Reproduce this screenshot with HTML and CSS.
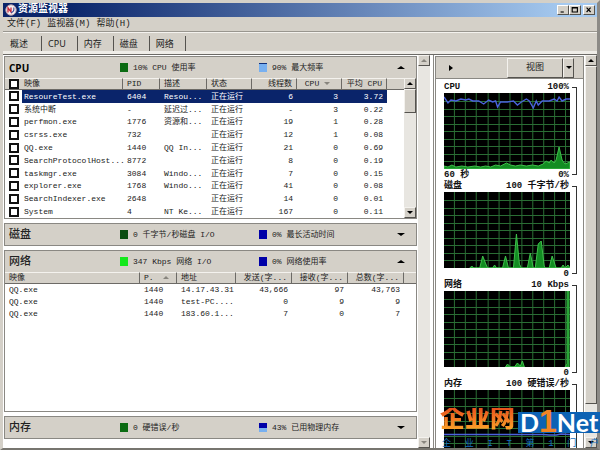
FILE: index.html
```
<!DOCTYPE html>
<html lang="zh-CN">

<head>
	<meta charset="utf-8">
	<meta name="viewport" content="width=device-width,initial-scale=1">
	<title>资源监视器</title>
	<link rel="stylesheet" href="styles.css">
</head>

<body>
	<div class="window">
		<header class="titlebar">
			<svg class="appicon" viewBox="0 0 12 12">
				<circle cx="6" cy="6" r="5.2" fill="#f4eef0" stroke="#b9a0aa" />
				<path d="M3 8.5V3.8L6 8V3.5" fill="none" stroke="#c8283c" stroke-width="1.3" />
				<path d="M6 8.5Q9.500 8 8.800 3.500" fill="none" stroke="#394a94" stroke-width="1.1" />
			</svg>
			<h1>资源监视器</h1>
			<button class="winbtn" aria-label="最小化"><svg viewBox="0 0 11 10"><path d="M2.500 7.500h4" /></svg></button>
			<button class="winbtn" aria-label="最大化"><svg viewBox="0 0 11 10"><path d="M2 2h6.500v5.500H2zM2 2.500h6" /></svg></button>
			<button class="winbtn close" aria-label="关闭"><svg viewBox="0 0 11 10"><path d="M2.500 2l5 5.500M7.500 2l-5 5.500" /></svg></button>
		</header>

		<nav class="menu">
			<button>文件(F)</button>
			<button>监视器(M)</button>
			<button>帮助(H)</button>
		</nav>

		<nav class="tabs">
			<button class="active">概述</button>
			<button>CPU</button>
			<button>内存</button>
			<button>磁盘</button>
			<button>网络</button>
		</nav>

		<main>
			<div class="left">
				<section class="panel">
					<div class="panelhead">
						<h2 class="latin">CPU</h2>
						<span class="legend"><i class="swatch green"></i>10% CPU 使用率</span>
						<span class="legend"><i class="swatch sky"></i>90% 最大频率</span>
						<button class="toggle" aria-label="折叠 CPU"><i class="up"></i></button>
					</div>
					<div class="scrollbox">
						<table class="processes">
							<colgroup>
								<col class="c-check"><col class="c-image"><col class="c-pid"><col class="c-desc">
								<col class="c-num"><col class="c-num"><col class="c-num"><col class="c-num"><col>
							</colgroup>
							<thead>
								<tr>
									<th class="nosep"><input type="checkbox" aria-label="全选"></th>
									<th>映像</th>
									<th>PID</th>
									<th>描述</th>
									<th>状态</th>
									<th class="num">线程数</th>
									<th class="num">CPU <i class="sort down"></i></th>
									<th class="num">平均 CPU</th>
									<th class="nosep"></th>
								</tr>
							</thead>
							<tbody>
								<tr class="selected"><td><input type="checkbox" aria-label="ResoureTest.exe"></td><td>ResoureTest.exe</td><td>6404</td><td>Resou...</td><td>正在运行</td><td class="num">6</td><td class="num">3</td><td class="num">3.72</td><td></td></tr>
								<tr><td><input type="checkbox" aria-label="系统中断"></td><td>系统中断</td><td>-</td><td>延迟过...</td><td>正在运行</td><td class="num">-</td><td class="num">3</td><td class="num">0.22</td><td></td></tr>
								<tr><td><input type="checkbox" aria-label="perfmon.exe"></td><td>perfmon.exe</td><td>1776</td><td>资源和...</td><td>正在运行</td><td class="num">19</td><td class="num">1</td><td class="num">0.28</td><td></td></tr>
								<tr><td><input type="checkbox" aria-label="csrss.exe"></td><td>csrss.exe</td><td>732</td><td></td><td>正在运行</td><td class="num">12</td><td class="num">1</td><td class="num">0.08</td><td></td></tr>
								<tr><td><input type="checkbox" aria-label="QQ.exe"></td><td>QQ.exe</td><td>1440</td><td>QQ In...</td><td>正在运行</td><td class="num">21</td><td class="num">0</td><td class="num">0.69</td><td></td></tr>
								<tr><td><input type="checkbox" aria-label="SearchProtocolHost"></td><td>SearchProtocolHost...</td><td>8772</td><td></td><td>正在运行</td><td class="num">8</td><td class="num">0</td><td class="num">0.19</td><td></td></tr>
								<tr><td><input type="checkbox" aria-label="taskmgr.exe"></td><td>taskmgr.exe</td><td>3084</td><td>Windo...</td><td>正在运行</td><td class="num">7</td><td class="num">0</td><td class="num">0.15</td><td></td></tr>
								<tr><td><input type="checkbox" aria-label="explorer.exe"></td><td>explorer.exe</td><td>1768</td><td>Windo...</td><td>正在运行</td><td class="num">41</td><td class="num">0</td><td class="num">0.08</td><td></td></tr>
								<tr><td><input type="checkbox" aria-label="SearchIndexer.exe"></td><td>SearchIndexer.exe</td><td>2648</td><td></td><td>正在运行</td><td class="num">14</td><td class="num">0</td><td class="num">0.01</td><td></td></tr>
								<tr><td><input type="checkbox" aria-label="System"></td><td>System</td><td>4</td><td>NT Ke...</td><td>正在运行</td><td class="num">167</td><td class="num">0</td><td class="num">0.11</td><td></td></tr>
							</tbody>
						</table>
						<div class="scrollbar">
							<button aria-label="向上"><i class="up"></i></button>
							<div class="thumb short"></div>
							<div class="track"></div>
							<button aria-label="向下"><i class="down"></i></button>
						</div>
					</div>
				</section>

				<section class="panel">
					<div class="panelhead">
						<h2>磁盘</h2>
						<span class="legend"><i class="swatch dark"></i>0 千字节/秒磁盘 I/O</span>
						<span class="legend"><i class="swatch blue"></i>0% 最长活动时间</span>
						<button class="toggle" aria-label="展开磁盘"><i class="down"></i></button>
					</div>
				</section>

				<section class="panel grow">
					<div class="panelhead">
						<h2>网络</h2>
						<span class="legend"><i class="swatch lime"></i>347 Kbps 网络 I/O</span>
						<span class="legend"><i class="swatch blue"></i>0% 网络使用率</span>
						<button class="toggle" aria-label="折叠网络"><i class="up"></i></button>
					</div>
					<table class="network">
						<colgroup>
							<col class="n-image"><col class="n-pid"><col class="n-addr">
							<col class="n-num"><col class="n-num"><col class="n-num"><col>
						</colgroup>
						<thead>
							<tr>
								<th>映像</th>
								<th>P. <i class="sort up"></i></th>
								<th>地址</th>
								<th class="num">发送(字...</th>
								<th class="num">接收(字...</th>
								<th class="num">总数(字...</th>
								<th class="nosep"></th>
							</tr>
						</thead>
						<tbody>
							<tr><td>QQ.exe</td><td>1440</td><td>14.17.43.31</td><td class="num">43,666</td><td class="num">97</td><td class="num">43,763</td><td></td></tr>
							<tr><td>QQ.exe</td><td>1440</td><td>test-PC....</td><td class="num">0</td><td class="num">9</td><td class="num">9</td><td></td></tr>
							<tr><td>QQ.exe</td><td>1440</td><td>183.60.1...</td><td class="num">7</td><td class="num">0</td><td class="num">7</td><td></td></tr>
						</tbody>
					</table>
				</section>

				<section class="panel">
					<div class="panelhead">
						<h2>内存</h2>
						<span class="legend"><i class="swatch green"></i>0 硬错误/秒</span>
						<span class="legend"><i class="swatch used"></i>43% 已用物理内存</span>
						<button class="toggle" aria-label="展开内存"><i class="down"></i></button>
					</div>
				</section>
			</div>

			<div class="scrollbar disabled">
				<button aria-label="向上"><i class="up"></i></button>
				<div class="track"></div>
				<button aria-label="向下"><i class="down"></i></button>
			</div>

			<aside class="right">
				<div class="viewbar">
					<button class="expand" aria-label="隐藏图表"><i class="next"></i></button>
					<button class="view">视图</button>
					<button class="viewdrop" aria-label="视图选项"><i class="down"></i></button>
				</div>
				<div class="graphs">
					<section class="graph">
						<div class="cap"><h3>CPU</h3><span>100%</span></div>
						<svg viewBox="0 0 127 76" preserveAspectRatio="none">
							<defs>
								<path id="grid" d="M10.500 0v76M21.500 0v76M32.500 0v76M44.500 0v76M55.500 0v76M66.500 0v76M78.500 0v76M89.500 0v76M100.500 0v76M111.500 0v76M122.500 0v76M0 8.500h127M0 16.500h127M0 23.500h127M0 31.500h127M0 38.500h127M0 46.500h127M0 53.500h127M0 61.500h127M0 68.500h127" />
							</defs>
							<use href="#grid" class="grid" />
							<path class="area" d="M0 76V73L4 74L8 72L12 74L18 73L24 74L31 73L37 74L42 73L47 74L52 72L57 73L63 70L67 72L72 73L77 72L83 73L89 72L95 73L100 71L103 68L106 70L108 67L111 70L113 67L116 54L119 67L122 71L127 69V76Z" />
							<path class="line" d="M0 4L4 10L7 7L12 8L17 6L22 7L25 6L29 8L35 8L40 11L45 7L49 9L52 8L54 14L57 9L64 9L70 8L74 12L78 9L83 6L86 8L90 15L93 8L95 12L99 8L106 8L111 6L114 8L116 4L119 8L123 6L127 6" />
						</svg>
						<div class="cap"><span>60 秒</span><span>0%</span></div>
						<i class="bracket"></i>
					</section>
					<section class="graph">
						<div class="cap"><h3>磁盘</h3><span>100 千字节/秒</span></div>
						<svg viewBox="0 0 127 76" preserveAspectRatio="none">
							<use href="#grid" class="grid" />
							<path class="area" d="M26 76L28 74L30 76H36L39 64L43 74L44 76H49L51 73L53 76H59L62 64L65 76H70L73 42L76 72L78 76H84L87 61L90 76H92L95 52L98 49L101 74L102 76H106L109 64L113 76H118L120 73L122 76L125 73L127 76Z" />
						</svg>
						<div class="cap"><span></span><span>0</span></div>
						<i class="bracket"></i>
					</section>
					<section class="graph">
						<div class="cap"><h3>网络</h3><span>10 Kbps</span></div>
						<svg viewBox="0 0 127 76" preserveAspectRatio="none">
							<use href="#grid" class="grid" />
							<path class="area" d="M62 76L64 73L67 76H71L74 72L77 75L79 70L81 76ZM122 76L124 73V0H126V76Z" />
						</svg>
						<div class="cap"><span></span><span>0</span></div>
						<i class="bracket"></i>
					</section>
					<section class="graph">
						<div class="cap"><h3>内存</h3><span>100 硬错误/秒</span></div>
						<svg viewBox="0 0 127 76" preserveAspectRatio="none">
							<use href="#grid" class="grid" />
							<path class="line" d="M0 44.500H100L106 45L113 45L118 44L127 44.500" />
						</svg>
						<i class="bracket"></i>
					</section>
				</div>
			</aside>

			<div class="scrollbar">
				<button aria-label="向上"><i class="up"></i></button>
				<div class="thumb long"></div>
				<div class="track"></div>
				<button aria-label="向下"><i class="down"></i></button>
			</div>
		</main>
	</div>

	<div class="stamp">
		<div class="logo">
			<span class="name">企业网</span>
			<span class="brand">D<b>1</b>Net</span>
		</div>
		<div class="slogan"><span>企</span><span>业</span><span>I</span><span>T</span><span>第</span><span>1</span><span>门</span><span>户</span></div>
	</div>
</body>

</html>
```
FILE: styles.css
```
* {
	box-sizing: border-box;
}

body {
	margin: 0;
	height: 100vh;
	overflow: hidden;
	position: relative;
	font-family: "Liberation Mono", "Noto Sans CJK SC", monospace;
	font-size: 8px;
	line-height: 11px;
	color: #222;
	background: #d4d0c8;
}

h1,
h2,
h3 {
	margin: 0;
}

button {
	margin: 0;
	padding: 0;
	border: 0;
	background: none;
	font: inherit;
	color: inherit;
}

.window {
	height: 100%;
	display: flex;
	flex-direction: column;
	border: 3px solid #d4d0c8;
	border-right-color: #8c8a86;
	border-bottom: 2px solid #77756f;
}

/* title bar */
.titlebar {
	flex: none;
	display: flex;
	align-items: center;
	height: 14px;
	padding: 0 2px;
	background: linear-gradient(to right, #0a246a 10%, #a6caf0 95%);
}

.titlebar h1 {
	flex: 1;
	margin-left: 1px;
	font-size: 10px;
	line-height: 14px;
	font-weight: bold;
	color: #fff;
}

.appicon {
	width: 12px;
	height: 12px;
}

.winbtn {
	width: 12px;
	height: 10px;
	background: #d4d0c8;
	border: 1px solid;
	border-color: #fff #55534f #55534f #fff;
}

.winbtn.close {
	margin-left: 2px;
}

.winbtn svg {
	display: block;
	width: 100%;
	height: 100%;
	fill: none;
	stroke: #000;
	stroke-width: 1.4;
}

/* menu and tabs */
.menu {
	flex: none;
	display: flex;
	gap: 6px;
	height: 15px;
	padding: 0 4px;
	border-bottom: 1px solid #99968f;
	font-size: 9px;
	line-height: 14px;
}

.tabs {
	flex: none;
	display: flex;
	height: 23px;
	padding-top: 3px;
	border-top: 1px solid #f4f2ee;
	border-bottom: 1px solid #6c6a66;
	box-shadow: inset 0 -3px #efede8;
	font-family: "Noto Sans", "Noto Sans CJK SC", sans-serif;
	font-size: 9px;
	line-height: 14px;
}

.tabs button {
	height: 15px;
	padding: 0 11px 0 6px;
	border-right: 1px solid #55534f;
}

.tabs .active {
	padding: 0 13px 0 7px;
	line-height: 12px;
}

/* arrows */
.up,
.down,
.next {
	display: inline-block;
	border: 3px solid transparent;
}

.up {
	border-top-width: 0;
	border-bottom-color: #000;
}

.down {
	border-bottom-width: 0;
	border-top-color: #000;
}

.next {
	border-right-width: 0;
	border-left: 4px solid #000;
}

.toggle .up,
.toggle .down {
	border-left-width: 4px;
	border-right-width: 4px;
}

.sort.up {
	border-bottom-color: #88857e;
	margin: 0 0 1px 5px;
}

.sort.down {
	border-top-color: #88857e;
	margin: 0 7px 1px 0;
}

/* panes */
main {
	flex: 1;
	min-height: 0;
	display: flex;
	background: #fff;
}

.left {
	flex: 1;
	min-width: 0;
	display: flex;
	flex-direction: column;
	gap: 4px;
	padding: 1px 1px 9px;
}

.panel {
	border: 1px solid #8a8883;
}

.grow {
	flex: 1;
	min-height: 0;
	overflow: hidden;
}

.panelhead {
	display: grid;
	grid-template-columns: 111px 139px 1fr auto;
	align-items: center;
	height: 21px;
	padding: 0 11px 0 4px;
	background: #d4d0c8;
}

.panelhead h2 {
	font-size: 11px;
	line-height: 20px;
	font-weight: 500;
}

.panelhead .latin {
	font-family: "Open Sans", "Noto Sans", sans-serif;
	font-size: 10px;
	font-weight: bold;
	color: #000;
}

.legend {
	display: flex;
	align-items: center;
	gap: 5px;
	white-space: nowrap;
}

.swatch {
	width: 8px;
	height: 9px;
}

.green {
	background: #0b6b12;
}

.dark {
	background: #0a4d10;
}

.lime {
	background: #14e81c;
}

.blue {
	background: #0000a8;
}

.sky {
	background: #78b0f0;
	border-top: 1px solid #10307c;
}

.used {
	background: linear-gradient(#0000a8 60%, #78b0f0 60%);
}

.toggle {
	display: flex;
}

/* tables */
table {
	width: 100%;
	table-layout: fixed;
	border-collapse: separate;
	border-spacing: 0;
}

th,
td {
	padding: 0 4px;
	text-align: left;
	font-weight: normal;
	white-space: nowrap;
}

th {
	height: 12px;
	background: #d4d0c8;
	border-right: 1px solid #6c6a66;
	border-top: 1px solid #f4f2ee;
	border-bottom: 1px solid #6c6a66;
	line-height: 10px;
}

.num {
	text-align: right;
}

.nosep {
	border-right: 0;
}

.scrollbox {
	display: flex;
}

.processes {
	flex: 1;
	height: 140px;
}

.processes td:nth-child(2),
.processes th:nth-child(2) {
	padding-left: 2px;
}

.processes th:first-child,
.processes td:first-child {
	line-height: 0;
}

.selected td:not(:first-child, :last-child) {
	background: #0a246a;
	color: #fff;
}

.c-check {
	width: 17px;
}

.c-image {
	width: 101px;
}

.c-pid,
.n-pid {
	width: 37px;
}

.c-desc {
	width: 47px;
}

.c-num {
	width: 45px;
}

.n-image {
	width: 135px;
}

.n-addr {
	width: 59px;
}

.n-num {
	width: 56px;
}

.network tbody {
	line-height: 12px;
}

input[type=checkbox] {
	appearance: none;
	display: block;
	width: 10px;
	height: 10px;
	margin: 0;
	border: 1px solid #111;
	outline: 1px solid #111;
	outline-offset: -2px;
	background: #fff;
}

/* scroll bars */
.scrollbar {
	flex: none;
	width: 12px;
	display: flex;
	flex-direction: column;
	background: #e8e6e1;
}

.scrollbar button,
.thumb {
	flex: none;
	height: 11px;
	background: #d4d0c8;
	border: 1px solid;
	border-color: #f4f2ee #55534f #55534f #f4f2ee;
}

.scrollbar button {
	display: flex;
	align-items: center;
	justify-content: center;
}

.thumb.short {
	height: 24px;
}

.thumb.long {
	height: 338px;
}

.track {
	flex: 1;
}

.disabled {
	margin-right: 3px;
}

.disabled .up {
	border-bottom-color: #88857e;
}

.disabled .down {
	border-top-color: #88857e;
}

/* graph pane */
.right {
	flex: none;
	width: 152px;
	display: flex;
	flex-direction: column;
	padding: 1px 1px 0;
	border-left: 1px solid #8a8883;
}

.viewbar {
	flex: none;
	display: flex;
	align-items: center;
	height: 23px;
	padding: 0 9px 0 13px;
	background: #d4d0c8;
	border: 1px solid #8a8883;
}

.expand {
	display: flex;
	margin-right: auto;
}

.view,
.viewdrop {
	height: 20px;
	border: 1px solid;
	border-color: #f4f2ee #55534f #55534f #f4f2ee;
}

.view {
	width: 56px;
	font-size: 9px;
	line-height: 18px;
}

.viewdrop {
	display: flex;
	align-items: center;
	justify-content: center;
	width: 11px;
}

.graphs {
	flex: 1;
	min-height: 0;
	overflow: hidden;
	padding: 2px 6px 0 8px;
	border: 1px solid #8a8883;
	border-width: 0 1px;
}

.graph {
	display: grid;
	grid-template-columns: 1fr 5px;
	grid-template-rows: 12px 76px 11px;
	column-gap: 2px;
}

.graph svg {
	width: 100%;
	height: 76px;
	background: #000;
}

.cap {
	grid-column: 1;
	display: flex;
	justify-content: space-between;
	padding-right: 1px;
	font-size: 9px;
	line-height: 12px;
	font-weight: bold;
	color: #111;
	white-space: nowrap;
}

.cap h3 {
	font-size: 9px;
}

.bracket {
	grid-column: 2;
	grid-row: 1 / 4;
	margin: 6px 0 5px;
	border: 1px solid #333;
	border-left: 0;
}

.grid {
	fill: none;
	stroke: #2a6e34;
	stroke-width: 1;
}

.area {
	fill: #128c22;
	stroke: #3fc04c;
	stroke-width: 1;
}

.line {
	fill: none;
	stroke: #4a62dc;
	stroke-width: 1.4;
}

/* site stamp over the corner */
.stamp {
	position: absolute;
	right: 0;
	bottom: 0;
	width: 160px;
	height: 44px;
}

.logo {
	display: flex;
	justify-content: space-between;
	align-items: flex-end;
	height: 27px;
}

.name {
	font-size: 25px;
	line-height: 25px;
	font-weight: 900;
	color: transparent;
	background: linear-gradient(#e8501c, #ffb02c);
	background-clip: text;
}

.brand {
	width: 82px;
	height: 21px;
	padding-left: 2px;
	font-family: Lato, sans-serif;
	font-size: 25px;
	line-height: 21px;
	font-weight: bold;
	color: #fff;
	background: #0c62b4;
	white-space: nowrap;
}

.brand b {
	font-family: "Liberation Sans", sans-serif;
	font-size: 32px;
	line-height: 0;
	color: #f08424;
}

.slogan {
	display: flex;
	justify-content: space-between;
	padding: 6px 1px 0 2px;
	font-size: 9px;
	line-height: 11px;
	color: #1470c0;
}
```
